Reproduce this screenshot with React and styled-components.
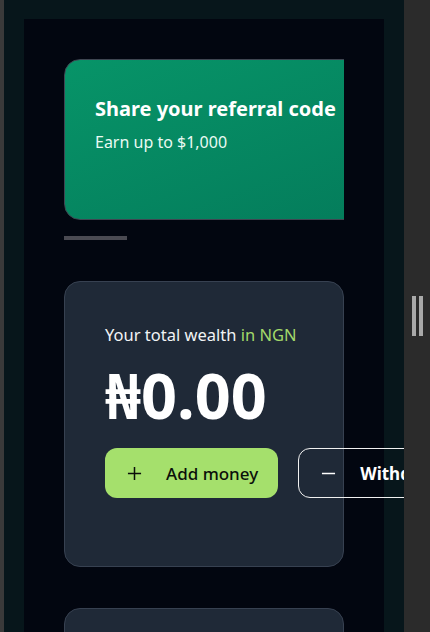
import React from "react";
import styled, { createGlobalStyle } from "styled-components";

const GlobalStyle = createGlobalStyle`
  html, body {
    margin: 0;
    padding: 0;
    background: #2b2b2b;
    font-family: "Noto Sans", "Open Sans", sans-serif;
  }
  * { box-sizing: border-box; }
`;

const Frame = styled.div`
  display: flex;
  width: 430px;
  height: 632px;
  overflow: hidden;
  background: #2b2b2b;
`;

const LeftEdge = styled.div`
  width: 4px;
  flex: none;
  background: #3a3a3a;
`;

const Panel = styled.div`
  width: 400px;
  flex: none;
  background: #07161b;
  padding: 19px 20px 0;
  overflow: hidden;
`;

const Screen = styled.div`
  width: 360px;
  height: 100%;
  background: #020610;
  padding: 40px 40px 0;
  display: flex;
  flex-direction: column;
  > * { flex: none; }
`;

const Splitter = styled.div`
  flex: 1;
  display: flex;
  align-items: center;
  justify-content: center;
  gap: 3px;
  span {
    width: 4px;
    height: 40px;
    background: #a9a9a9;
  }
`;

const Carousel = styled.div`
  width: 280px;
  overflow: hidden;
  display: flex;
  gap: 16px;
`;

const PromoCard = styled.div`
  flex: none;
  width: 320px;
  height: 161px;
  border: 1px solid #3f4652;
  border-radius: 16px;
  background: linear-gradient(160deg, #079468 0%, #047c5b 100%);
  padding: 36px 30px;
  color: #fff;
`;

const PromoTitle = styled.div`
  font-size: 20px;
  font-weight: 700;
  white-space: nowrap;
  line-height: 26px;
`;

const PromoText = styled.div`
  margin-top: 10px;
  font-size: 16px;
  line-height: 20px;
  color: #eafaf3;
`;

const Indicator = styled.div`
  margin-top: 16px;
  width: 63px;
  height: 4px;
  background: #4a4a52;
`;

const WealthCard = styled.div`
  margin-top: 41px;
  width: 280px;
  height: 286px;
  background: #1f2937;
  border: 1px solid #374151;
  border-radius: 16px;
  padding: 42px 40px;
`;

const Label = styled.div`
  font-size: 16.5px;
  line-height: 22px;
  color: #f1f3f5;
  span { color: #a3d96a; }
`;

const Amount = styled.div`
  margin-top: 14px;
  font-size: 63px;
  font-weight: 700;
  line-height: 70px;
  color: #fff;
`;

const Actions = styled.div`
  display: flex;
  gap: 20px;
  margin-top: 18px;
  width: max-content;
`;

const Button = styled.button`
  display: flex;
  align-items: center;
  gap: 24px;
  height: 50px;
  padding: 0 20px 0 22px;
  border-radius: 12px;
  font-family: inherit;
  font-size: 17px;
  font-weight: ${(p) => (p.$outline ? 700 : 500)};
  color: ${(p) => (p.$outline ? "#fff" : "#0b0f0a")};
  background: ${(p) => (p.$outline ? "transparent" : "#a5e06c")};
  border: ${(p) => (p.$outline ? "1px solid #f1f1f1" : "none")};
  white-space: nowrap;
  svg { flex: none; }
`;

const NextCard = styled.div`
  margin-top: 41px;
  width: 280px;
  height: 80px;
  background: #1f2937;
  border: 1px solid #374151;
  border-radius: 16px;
`;

const Plus = () => (
  <svg width="15" height="15" viewBox="0 0 16 16" fill="none" stroke="currentColor" strokeWidth="1.6">
    <path d="M8 1v14M1 8h14" />
  </svg>
);

const Minus = () => (
  <svg width="15" height="15" viewBox="0 0 16 16" fill="none" stroke="currentColor" strokeWidth="1.6">
    <path d="M1 8h14" />
  </svg>
);

export default function App() {
  return (
    <>
      <GlobalStyle />
      <Frame>
        <LeftEdge />
        <Panel>
          <Screen>
            <Carousel>
              <PromoCard>
                <PromoTitle>Share your referral code</PromoTitle>
                <PromoText>Earn up to $1,000</PromoText>
              </PromoCard>
            </Carousel>
            <Indicator />
            <WealthCard>
              <Label>
                Your total wealth <span>in NGN</span>
              </Label>
              <Amount>₦0.00</Amount>
              <Actions>
                <Button>
                  <Plus />
                  Add money
                </Button>
                <Button $outline>
                  <Minus />
                  Withdraw
                </Button>
              </Actions>
            </WealthCard>
            <NextCard />
          </Screen>
        </Panel>
        <Splitter>
          <span />
          <span />
        </Splitter>
      </Frame>
    </>
  );
}
